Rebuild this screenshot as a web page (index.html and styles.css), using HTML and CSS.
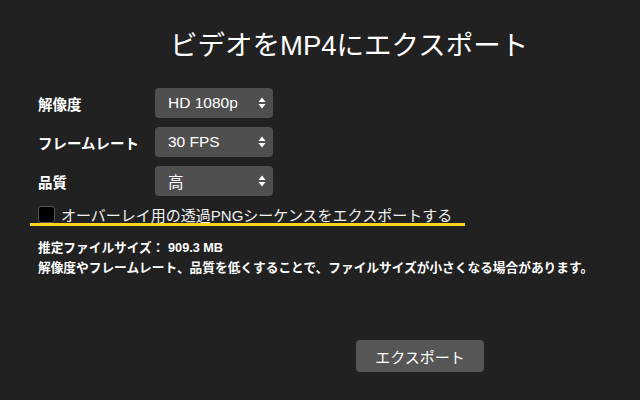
FILE: index.html
```html
<!DOCTYPE html>
<html lang="ja">
<head>
<meta charset="utf-8">
<link rel="stylesheet" href="styles.css">
</head>
<body>
<div class="dialog">
  <h1 class="title">ビデオをMP4にエクスポート</h1>
  <div class="form">
    <div class="label">解像度</div>
    <div class="select"><span>HD 1080p</span><svg class="arrows" width="8" height="12" viewBox="0 0 8 12"><path d="M4 0.5 L7.5 5 L0.5 5 Z M0.5 7 L7.5 7 L4 11.5 Z" fill="#fff"/></svg></div>
    <div class="label">フレームレート</div>
    <div class="select"><span>30 FPS</span><svg class="arrows" width="8" height="12" viewBox="0 0 8 12"><path d="M4 0.5 L7.5 5 L0.5 5 Z M0.5 7 L7.5 7 L4 11.5 Z" fill="#fff"/></svg></div>
    <div class="label">品質</div>
    <div class="select"><span>高</span><svg class="arrows" width="8" height="12" viewBox="0 0 8 12"><path d="M4 0.5 L7.5 5 L0.5 5 Z M0.5 7 L7.5 7 L4 11.5 Z" fill="#fff"/></svg></div>
  </div>
  <label class="check">
    <span class="box"></span>
    <span class="check-text">オーバーレイ用の透過PNGシーケンスをエクスポートする</span>
  </label>
  <div class="info">
    <div class="size">推定ファイルサイズ： 909.3 MB</div>
    <div class="hint">解像度やフレームレート、品質を低くすることで、ファイルサイズが小さくなる場合があります。</div>
  </div>
  <div class="actions">
    <button class="btn">エクスポート</button>
  </div>
</div>
</body>
</html>
```

FILE: styles.css
```css
html, body {
  margin: 0;
  padding: 0;
  background: #212121;
  width: 640px;
  height: 400px;
  overflow: hidden;
}
body {
  font-family: "Liberation Sans", "Noto Sans CJK JP", sans-serif;
  color: #fff;
}
.dialog {
  display: flex;
  flex-direction: column;
  padding: 0 0 0 38px;
}
.title {
  margin: 28px 0 0 132px;
  font-size: 27.5px;
  font-weight: 400;
  line-height: 36px;
}
.form {
  margin-top: 24px;
  display: grid;
  grid-template-columns: 117px 118px;
  grid-auto-rows: 30px;
  row-gap: 9px;
}
.label {
  display: flex;
  align-items: center;
  font-size: 14.5px;
  font-weight: 700;
}
.select {
  background: #4f4f4f;
  border-radius: 4px;
  display: flex;
  align-items: center;
  justify-content: space-between;
  padding: 0 7px 0 13px;
  font-size: 15.5px;
}
.arrows {
  display: block;
}
.check {
  margin: 10px 0 0 -8px;
  padding: 0 0 0 8px;
  width: 427px;
  height: 17px;
  display: flex;
  align-items: center;
  gap: 6px;
  border-bottom: 3px solid #f8d71c;
}
.box {
  width: 15px;
  height: 15px;
  background: #000;
  border: 1px solid #555;
  border-radius: 3px;
  flex: none;
}
.check-text {
  font-size: 15px;
  white-space: nowrap;
  color: #f2f2f2;
}
.info {
  margin-top: 12px;
  font-size: 12.7px;
  line-height: 20px;
}
.size {
  font-weight: 700;
}
.hint {
  font-weight: 700;
  white-space: nowrap;
}
.actions {
  margin-top: 62px;
  padding-left: 318px;
}
.btn {
  width: 128px;
  height: 32px;
  background: #565656;
  border: none;
  border-radius: 4px;
  color: #fff;
  font-family: "Liberation Sans", "Noto Sans CJK JP", sans-serif;
  font-size: 15px;
}
```
